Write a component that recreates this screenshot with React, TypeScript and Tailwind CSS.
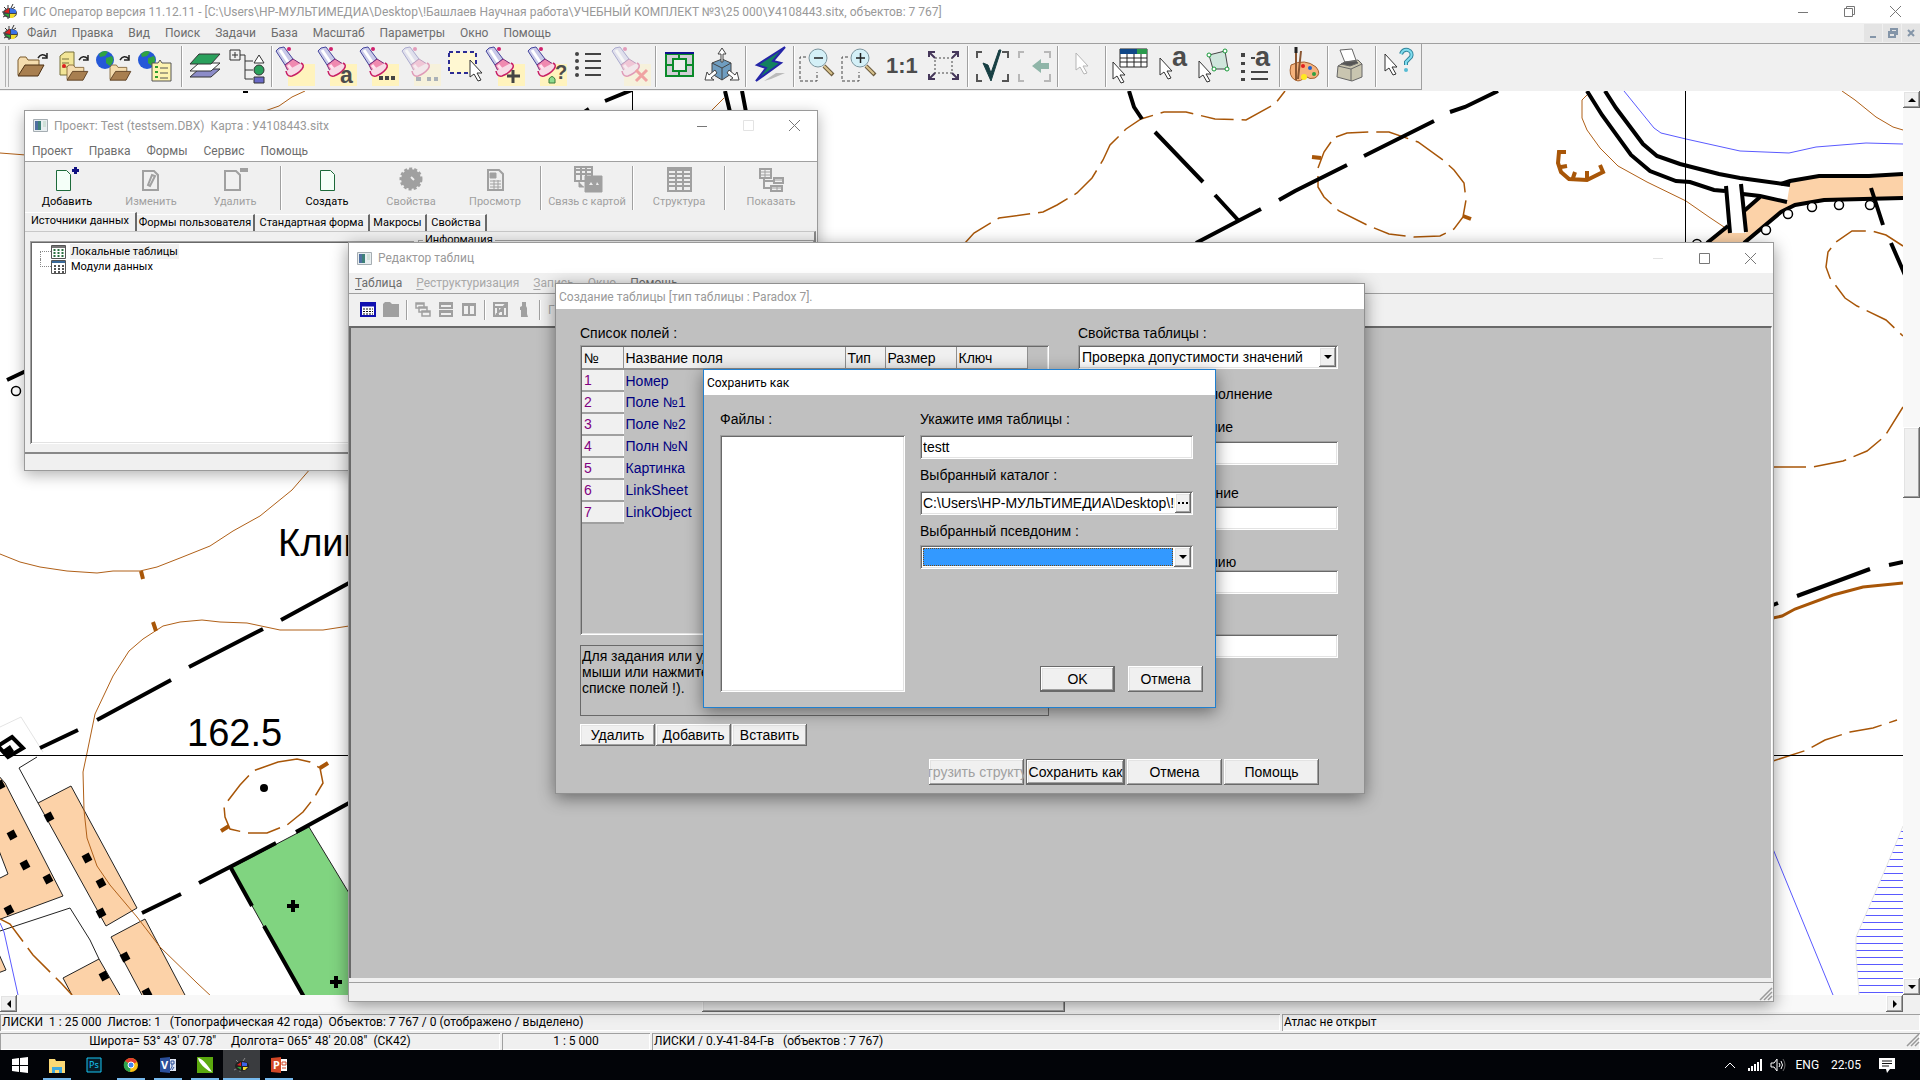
import type { ReactNode } from "react";

const UI = "font-[Roboto,'Noto_Sans',sans-serif] text-[12px] leading-4";
const SMALL = "font-[Roboto,'Noto_Sans',sans-serif] text-[11px] leading-4";
const DLG = "font-['Liberation_Sans',Arial,sans-serif] text-[14px] leading-4";

const SUNKEN =
  "shadow-[inset_1px_1px_0_#a0a0a0,inset_-1px_-1px_0_#fff,inset_2px_2px_0_#696969,inset_-2px_-2px_0_#e3e3e3]";
const RAISED =
  "shadow-[inset_-1px_-1px_0_#696969,inset_1px_1px_0_#fff,inset_-2px_-2px_0_#a0a0a0,inset_2px_2px_0_#e3e3e3]";
const PANEL = "shadow-[inset_1px_1px_0_#a0a0a0,inset_-1px_-1px_0_#fff]";

/* ---------- toolbar drawings ---------- */

function Flashlight({ faded, children }: { faded?: boolean; children?: ReactNode }) {
  return (
    <g opacity={faded ? 0.4 : 1}>
      <path d="M13 19h27v22H13z" fill="#fff3bd" />
      <path d="M1 6Q3 2 9 2l9 12-8 6z" fill="#c9c9e8" stroke="#45459c" />
      <path d="m5 5 8 12" stroke="#fff" strokeWidth="3" />
      <path d="m10 20 8-6 8 5-12 9z" fill="#f08ab0" stroke="#7a2a78" />
      <path d="m13 20 4 5" stroke="#ffe3ee" strokeWidth="3" />
      <path d="M26 18q4 2 1 6-4 5-10 7-5 1-6-5" fill="#f7dbe6" stroke="#c81e64" strokeWidth="1.5" />
      <circle cx="14" cy="4" r="2" fill="#d0206c" />
      {children}
    </g>
  );
}

function Folder({ x, y }: { x: number; y: number }) {
  return (
    <g transform={`translate(${x} ${y})`}>
      <path d="M0 18V3l2-3h6l2 3h11v5" fill="#f5dcae" stroke="#7a5a2c" />
      <path d="M0 19 7 8h19l-6 11z" fill="#a87f50" stroke="#4d3013" />
    </g>
  );
}

function TurnArrow({ x, y }: { x: number; y: number }) {
  return (
    <path
      transform={`translate(${x} ${y})`}
      d="M0 5Q4-1 9 4M9 0v5H4"
      stroke="#222"
      strokeWidth="1.5"
      fill="none"
    />
  );
}

function Globe() {
  return (
    <g>
      <circle cx="10" cy="15" r="9" fill="#2558d8" />
      <path d="M4 9q5-5 9-2l-3 4-5 1zM11 13l6-2q3 5-2 10l-4-3z" fill="#2fa342" />
    </g>
  );
}

function Pointer({ x, y, faded }: { x: number; y: number; faded?: boolean }) {
  return (
    <path
      transform={`translate(${x} ${y})`}
      d="M0 0v17l4-3 4 7 3-1-4-7h5z"
      fill="#fff"
      stroke={faded ? "#b5b5b5" : "#333"}
    />
  );
}

function Magnifier({ plus }: { plus?: boolean }) {
  return (
    <g>
      <path d="M9 12H3v24h17v-9" fill="none" stroke="#444" strokeDasharray="3 2" />
      <path d="m27 21 9 9" stroke="#6b5a3c" strokeWidth="4" />
      <path d="m27 21 8 8" stroke="#d9c48f" strokeWidth="2" />
      <circle cx="21" cy="13" r="9" fill="#d4f0f7" stroke="#7b959e" />
      <path d={plus ? "M17 13h9M21.500 8v10" : "M17 13h9"} stroke="#222" strokeWidth="1.5" />
    </g>
  );
}

function Glyph({ x, y, size, children }: { x: number; y: number; size: number; children: ReactNode }) {
  return (
    <text x={x} y={y} fontSize={size} fontWeight="700" fill="#4c4c4c" fontFamily="Liberation Sans, Arial, sans-serif">
      {children}
    </text>
  );
}

const listRows = [9, 16, 23, 30];

function Lines() {
  return (
    <g>
      {listRows.map((y) => (
        <g key={y}>
          <circle cx="8" cy={y} r="2" fill="#444" />
          <path d={`M16 ${y}h16`} stroke="#444" strokeWidth="2" />
        </g>
      ))}
    </g>
  );
}

type Tool = { label: string; icon: ReactNode };

const toolGroups: Tool[][] = [
  [
    {
      label: "Открыть карту",
      icon: (
        <g>
          <Folder x={7} y={12} />
          <TurnArrow x={27} y={8} />
        </g>
      ),
    },
    {
      label: "Открыть с сервера",
      icon: (
        <g>
          <path d="M7 11 12 7h9v20l-4 3H7z" fill="#f2e596" stroke="#77703a" />
          <path d="M9 14h7M9 18h7M9 22h7" stroke="#77703a" />
          <circle cx="11" cy="21" r="2" fill="#e02020" />
          <g transform="translate(14 20) scale(.8)">
            <Folder x={0} y={0} />
          </g>
          <TurnArrow x={26} y={10} />
        </g>
      ),
    },
    {
      label: "Открыть геопортал",
      icon: (
        <g>
          <Globe />
          <g transform="translate(15 20) scale(.8)">
            <Folder x={0} y={0} />
          </g>
          <TurnArrow x={25} y={10} />
        </g>
      ),
    },
    {
      label: "Список геопорталов",
      icon: (
        <g>
          <Globe />
          <path d="M15 18h6l2-3 2 3h9v18H15z" fill="#fdf3b0" stroke="#555" />
          <path d="M23 23h8M23 28h8M23 33h8" stroke="#555" />
          <path d="M18 22h3M18 27h3M18 32h3" stroke="#2f9e2f" strokeWidth="2" />
        </g>
      ),
    },
  ],
  [
    {
      label: "Слои",
      icon: (
        <g stroke="#333">
          <path d="M5 32 14 24h21l-9 8z" fill="#8c8cc8" />
          <path d="M5 26 14 18h21l-9 8z" fill="#fff" />
          <path d="M5 19 14 9h21l-9 10z" fill="#2aa05c" />
        </g>
      ),
    },
    {
      label: "Состав",
      icon: (
        <g stroke="#333" fill="none">
          <path d="M3 5h10v10H3zM5 10h6M8 7v6M13 10h5v24h8M18 16h8M18 25h8" />
          <path d="m32 10 5 8H27z" fill="#fff" />
          <circle cx="32" cy="25" r="5" fill="#2aa05c" />
          <path d="M27 32h10v6H27z" fill="#6a6ac8" />
        </g>
      ),
    },
  ],
  [
    { label: "Поиск", icon: <Flashlight /> },
    { label: "Поиск по названию", icon: <Flashlight><Glyph x={23} y={38} size={23}>a</Glyph></Flashlight> },
    { label: "Поиск по списку", icon: <Flashlight><path d="M20 33h4M26 33h4M32 33h4" stroke="#444" strokeWidth="4" /></Flashlight> },
    { label: "Продолжить поиск", icon: <Flashlight faded><path d="M15 34h5M26 34h4M33 34h4" stroke="#456" strokeWidth="4" /></Flashlight> },
    {
      label: "Выделить область",
      icon: (
        <g>
          <path d="M6 7h27v21H6z" fill="#fff8d2" stroke="#2c2c94" strokeWidth="2" strokeDasharray="4 3" />
          <Pointer x={27} y={15} />
        </g>
      ),
    },
    { label: "Добавить к выделению", icon: <Flashlight><path d="M22 31h13M28 25v13" stroke="#444" strokeWidth="3" /></Flashlight> },
    {
      label: "Условия отбора",
      icon: (
        <Flashlight>
          <path d="M22 38v-4q3-5 6 0v4z" fill="#8fdc8f" stroke="#3a7a3a" />
          <Glyph x={28} y={34} size={20}>?</Glyph>
        </Flashlight>
      ),
    },
    { label: "Список объектов", icon: <Lines /> },
    { label: "Сбросить выделение", icon: <Flashlight faded><path d="m25 25 11 11M36 25 25 36" stroke="#f03030" strokeWidth="3" /></Flashlight> },
  ],
  [
    {
      label: "Окно карты",
      icon: (
        <g fill="none" stroke="#0b8a2a" strokeWidth="2">
          <path d="M7 9h27v22H7z" fill="#d2cfd6" />
          <path d="M14 14h13v12H14zM20 9v5M20 26v5M7 20h7M27 20h7" fill="#eee" />
          <path d="M6 8h29" stroke="#101090" />
        </g>
      ),
    },
    {
      label: "Трёхмерный вид",
      icon: (
        <g stroke="#444">
          <path d="m11 18 10-4 9 4v11l-9 6-10-6z" fill="#6f9dc0" />
          <path d="m11 18 10 5 9-5M21 23v12" fill="none" />
          <path d="M20 17V9h-3l4-6 4 6h-3v8z" fill="#fff" />
          <path d="m14 25-6 5-2-3-2 8h9l-3-2 6-5zM28 25l6 5 2-3 2 8h-9l3-2-6-5z" fill="#fff" />
        </g>
      ),
    },
  ],
  [
    {
      label: "Обновить",
      icon: (
        <g>
          <path d="m15 36 12-8 9 0-14 6z" fill="#bbb" />
          <path d="M36 2 8 20l9 3L7 36l25-18-8-2z" fill="#128060" stroke="#2525a8" strokeWidth="2" />
        </g>
      ),
    },
  ],
  [
    { label: "Уменьшить", icon: <Magnifier /> },
    { label: "Увеличить", icon: <Magnifier plus /> },
    { label: "Масштаб 1:1", icon: <Glyph x={5} y={28} size={22}>1:1</Glyph> },
    {
      label: "Показать всё",
      icon: (
        <g>
          <path d="M12 13h17v15H12z" fill="none" stroke="#444" strokeDasharray="2 2" />
          <path
            d="m12 13-5-5M29 13l5-5M12 28l-5 5M29 28l5 5M6 12V7h6M29 7h6v5M6 29v5h6M29 34h6v-5"
            fill="none"
            stroke="#45375a"
            strokeWidth="2"
          />
        </g>
      ),
    },
  ],
  [
    {
      label: "Применить",
      icon: (
        <g fill="none">
          <path d="M11 7H6v6M31 7h6v6M6 29v7h5M37 29v7h-6" stroke="#555" strokeWidth="2" />
          <path d="m12 18 5 2 3 8L28 5h2L20 36z" fill="#173f43" stroke="#173f43" />
        </g>
      ),
    },
    {
      label: "Вернуть",
      icon: (
        <g fill="none">
          <path d="M11 7H6v6M31 7h6v6M6 29v7h5M37 29v7h-6" stroke="#b8b8b8" strokeWidth="2" />
          <path d="m19 21 9-7v4h8v6h-8v4z" fill="#8fb5a8" />
        </g>
      ),
    },
  ],
  [{ label: "Указатель", icon: <Pointer x={15} y={8} faded /> }],
  [
    {
      label: "Таблица объектов",
      icon: (
        <g>
          <path d="M11 4h27v18H11z" fill="#fff" stroke="#222" />
          <path d="M11 4h27v5H11z" fill="#104888" />
          <path d="M28 4h10v5H28z" fill="#2a9a4c" />
          <path d="M11 13h27M11 17h27M18 9v13M25 9v13M32 9v13" stroke="#222" />
          <Pointer x={4} y={17} />
        </g>
      ),
    },
    { label: "Подпись объекта", icon: <g><Glyph x={21} y={21} size={27}>a</Glyph><Pointer x={9} y={13} /></g> },
    {
      label: "Контур объекта",
      icon: (
        <g>
          <path d="m16 10 16-4 3 18H20z" fill="#cfe6dc" stroke="#444" />
          {[[16, 10], [32, 6], [34, 24], [21, 24]].map(([cx, cy]) => (
            <circle key={cx} cx={cx} cy={cy} r="2" fill="#fff" stroke="#169a38" />
          ))}
          <Pointer x={6} y={16} />
        </g>
      ),
    },
    {
      label: "Легенда",
      icon: (
        <g>
          <path d="M8 8v4M8 17v3M8 25v3M8 33v3" stroke="#444" strokeWidth="4" />
          <path d="M16 13h4M16 27h17M16 34h17" stroke="#444" strokeWidth="2" />
          <Glyph x={20} y={21} size={27}>a</Glyph>
        </g>
      ),
    },
  ],
  [
    {
      label: "Палитра",
      icon: (
        <g>
          <path d="M8 20q14-7 25 2 6 7-1 11-5 2-10-2-4 7-10 4-7-4-4-15z" fill="#f6b27c" stroke="#a25f2e" />
          <circle cx="20" cy="21" r="2" fill="#e02020" />
          <circle cx="27" cy="23" r="2" fill="#2060d0" />
          <circle cx="31" cy="29" r="2" fill="#30a040" />
          <circle cx="21" cy="32" r="3" fill="#ffe920" />
          <path d="M13 3v32M18 6l-3 28" stroke="#8a5632" strokeWidth="2" />
          <path d="M13 2v6" stroke="#222" strokeWidth="3" />
        </g>
      ),
    },
  ],
  [
    {
      label: "Печать",
      icon: (
        <g stroke="#666">
          <path d="m9 5 12-1 5 14-11 2z" fill="#fff" />
          <path d="m7 21 7-4 13-2 4 4v13l-10 4-15-4z" fill="#c9c5b0" />
          <path d="m7 21 13 3 11-5M20 24v12" fill="none" />
          <path d="m10 19 4-2 11-1 2 2-8 3z" fill="#555" />
        </g>
      ),
    },
  ],
  [
    {
      label: "Справка",
      icon: (
        <g>
          <Pointer x={6} y={9} />
          <path d="M22 9q2-5 7-4 5 2 3 7l-5 5v3" fill="none" stroke="#32859c" strokeWidth="4" />
          <path d="M22 9q2-5 7-4 5 2 3 7l-5 5v3" fill="none" stroke="#7fdcee" strokeWidth="2" />
          <circle cx="27" cy="25" r="2" fill="#56bcd4" />
        </g>
      ),
    },
  ],
];

function AppIcon() {
  return (
    <svg width="16" height="16" viewBox="0 0 16 16" className="shrink-0">
      <path d="M2 3l3 3M6 1v4M11 0 9 4M0 8h4M1 13l4-2M13 3l-3 2M6 15v-3" stroke="#333" />
      <ellipse cx="8" cy="9" rx="7" ry="5" fill="#444" />
      <path d="M2 8 7 4v5z" fill="#e02020" />
      <path d="m8 4 6 2v3H8z" fill="#3c72e8" />
      <path d="M2 10h5v3z" fill="#28a438" />
      <path d="M8 10h6l-3 4H8z" fill="#f2dc30" />
    </svg>
  );
}

function FormIcon() {
  return (
    <svg width="15" height="13" viewBox="0 0 15 13" className="shrink-0">
      <path d="M.5.5h14v12H.5z" fill="#e8eef0" stroke="#a5adb2" />
      <path d="M2 2h6v9H2z" fill="#3d8078" />
      <path d="M2 2h3v9H2z" fill="#4f6fa0" />
      <path d="M10 2h3v6h-3z" fill="#cfe0d8" />
    </svg>
  );
}

/* ---------- map ---------- */

const houses = [
  [49, 817], [12, 835], [25, 865], [48, 879], [9, 910], [87, 858], [101, 883],
  [101, 913], [125, 957], [104, 976], [147, 993], [0, 785],
];
const posts = [[1870, 205], [1839, 205], [1812, 207], [1788, 214], [1766, 230], [1697, 244], [16, 391]];
const hatch = Array.from({ length: 24 }, (_, i) => 831 + i * 7);

function MapView() {
  return (
    <svg
      className="absolute inset-0 h-full w-full bg-white"
      viewBox="0 91 1903 904"
      preserveAspectRatio="xMinYMin slice"
      fill="none"
    >
      <defs>
        <clipPath id="marsh">
          <path d="M1903 826 1887 865 1856 937V955l3 40h44z" />
        </clipPath>
      </defs>

      {/* blocks */}
      <g fill="#fcd2a8" stroke="#222">
        <path d="M-2 775 5 783 63 896-2 920z" />
        <path d="M38 803 71 786l66 122-31 18zM111 937l34-18 41 78h-43zM63 978l36-19 22 38H73zM-2 952l8 18-8 3z" />
        <path d="m-2 848 10 26-10 5z" fill="#fff" />
      </g>
      <path d="M37 757 19 768 38 803M0 931 70 908 90 940 99 959" stroke="#222" />
      <path d="M231 868 309 827 352 898V997H303z" fill="#80d480" stroke="#222" />

      {/* hydrography */}
      <g stroke="#5a5aff">
        <path d="M1624 91 1654 128 1661 133 1686 139 1740 151 1789 153 1816 147 1866 143 1903 144" />
        <path d="M0 923 4 932 18 995M1773 849 1833 995" />
        <g clipPath="url(#marsh)" shapeRendering="crispEdges">
          {hatch.map((y) => (
            <path key={y} d={`M1850 ${y}.5H1903`} />
          ))}
        </g>
      </g>
      <path d="M1903 826 1887 865 1856 937V955l3 40" stroke="#e4e4e4" />
      <path d="M0 727 21 717 43 752" stroke="#e4e4e4" />

      {/* contours */}
      <g stroke="#b06018">
        <path d="M305 91 292 97 279 106 262 112M0 153 26 155M311 468 292 490 260 516 233 531 210 546 180 558 157 567 140 571H113L97 573 67 571 40 567 20 562 0 554" />
        <path d="M349 626 323 630H280L247 623 220 622 202 620 180 622 163 626 143 639 129 651 113 676 95 714 87 753 83 772 84 810 87 838 97 866 110 885 137 917 160 947 197 983 212 997" />
        <path d="M1587 95 1582 100V118L1587 130 1600 148 1618 166 1647 182 1686 201 1709 217 1724 227M1842 91 1855 100 1876 117 1893 127 1903 130M724 98 710 112" />
      </g>
      <g stroke="#a85608" strokeWidth="1.5" strokeDasharray="33 8">
        <path d="M965 243 974 233 999 218 1043 212 1057 205 1077 193 1092 178 1103 160 1110 145 1126 129 1141 119 1164 112H1186L1215 119 1246 120 1275 104 1285 91" />
        <path d="M1336 137 1347 133 1369 132H1389L1418 142 1443 160 1454 170 1464 183 1466 200 1463 217 1454 229 1440 236 1414 237 1389 234 1367 225 1339 211 1324 197 1318 187V168L1324 152 1331 142" />
        <path d="M1903 246 1886 235 1872 231H1852L1836 242 1828 252 1826 267 1830 278 1845 298 1857 306 1886 320 1903 336" />
        <path d="M1773 467H1813L1843 461 1867 451 1885 436 1903 407M1773 761 1807 750 1825 740 1850 732 1873 728 1897 720" />
        <path d="M278 762 297 759 310 762 320 768 323 783 314 798 303 812 287 825 267 833H247L230 829 225 817 224 806 240 785 253 771z" />
        <path d="M0 919 10 924 33 955 62 984 72 995" />
      </g>
      <path d="M1773 618 1782 616 1795 609 1833 595 1863 587 1903 583" stroke="#a85608" strokeWidth="3" />
      <g stroke="#a85608" strokeWidth="4">
        <path d="M1566 152 1559 152 1558 163 1561 172 1569 179 1587 180 1603 172 1600 165M1561 167 1567 166M1573 178 1575 172M1587 178V171" />
        <path d="M1312 157 1321 158M1463 216 1471 219M141 571 143 579M153 622 156 631M320 768 328 763M229 826 221 831" />
      </g>

      {/* roads */}
      <path
        d="M1790 183 1819 176H1869L1903 174V198L1824 200 1795 205 1781 212 1744 243H1707L1760 197 1787 202z"
        fill="#fcd2a8"
      />
      <g stroke="#000" strokeWidth="4">
        <path d="M1781 184 1790 181 1819 176H1869L1903 174M1903 198 1824 200 1795 205 1781 212 1744 243M1760 197 1744 211M1728 226 1707 243" />
        <path d="M1587 91 1602 115 1631 155 1650 171 1676 181 1690 182 1714 190 1725 191M1743 194 1760 196 1787 202" />
        <path d="M1605 91 1616 108 1643 144 1657 156 1680 164 1719 174 1740 178 1790 185" />
        <path d="M1726 186 1729 233H1746L1741 184z" fill="#fff" stroke="none" />
        <path d="M1726 186 1730 233M1741 184 1746 232" />
        <path d="M1871 188 1883 225M1891 243 1905 275M725 91 730 112M742 91 746 112" />
        <path d="M1129 91 1134 107 1142 119M1155 132 1203 182M1215 195 1238 220" />
        <path d="M1196 243 1261 209M1279 200 1295 191 1347 165M1364 156 1434 121M1450 112 1465 107 1498 91" />
        <path d="M605 101 632 90M583 113 589 109M7 380 26 371M243 91h5" />
        <path d="M1773 605 1778 603M1797 596 1870 569M1889 565 1903 562" />
        <path d="M349 583 281 620M263 629 189 667M171 680 97 720M78 730 40 748" />
        <path d="M349 803 296 832M276 843 199 883M181 894 142 913M231 868 252 906M264 926 304 997" />
        <path d="M12 737 23 748 8 757-2 746z" fill="#fff" />
        <path d="M287 906h12M293 900v12M330 982h12M336 976v12" />
      </g>
      <path d="m3 750 7-5 4 6-6 6z" fill="#000" />
      <g stroke="#000" shapeRendering="crispEdges">
        <path d="M0 755.500H1903M1685.500 91V755M632.500 91V243" />
      </g>
      {posts.map(([cx, cy]) => (
        <circle key={cx} cx={cx} cy={cy} r="4.500" stroke="#000" strokeWidth="1.500" fill="#fff" />
      ))}
      <circle cx="264" cy="788" r="4" fill="#000" />
      {houses.map(([x, y]) => (
        <path key={`${x}-${y}`} transform={`translate(${x} ${y}) rotate(-28)`} d="M-4-4h8v8h-8z" fill="#000" />
      ))}
      <g fill="#000" fontFamily="Liberation Sans, Arial, sans-serif" fontSize="38">
        <text x="278" y="556">Клим</text>
        <text x="187" y="746">162.5</text>
      </g>
    </svg>
  );
}

/* ---------- window furniture ---------- */

function CaptionButtons({ muted, max = true }: { muted?: "min" | "max"; max?: boolean }) {
  return (
    <div className="flex h-full items-center">
      <button aria-label="Свернуть" className={`flex h-full w-[46px] items-center justify-center ${muted === "min" ? "opacity-20" : ""}`}>
        <svg width="10" height="10"><path d="M0 5.500h10" stroke="#777" /></svg>
      </button>
      <button aria-label="Развернуть" className={`flex h-full w-[46px] items-center justify-center ${muted === "max" ? "opacity-20" : ""}`}>
        <svg width="11" height="11" fill="none" stroke="#777">
          {max ? <path d="M.5.5h10v10H.5z" /> : <path d="M.5 2.500h8v8h-8zM2.500 2.500v-2h8v8h-2" />}
        </svg>
      </button>
      <button aria-label="Закрыть" className="flex h-full w-[46px] items-center justify-center">
        <svg width="11" height="11"><path d="m0 0 11 11M11 0 0 11" stroke="#777" /></svg>
      </button>
    </div>
  );
}

function Arrow({ dir }: { dir: "up" | "down" | "left" | "right" }) {
  const d = { up: "M0 6 4 2l4 4z", down: "M0 2h8L4 6z", left: "M6 0v8L2 4z", right: "M2 0v8l4-4z" }[dir];
  return <svg width="8" height="8" className="shrink-0"><path d={d} fill="#000" /></svg>;
}

function ScrollButton({ dir, label }: { dir: "up" | "down" | "left" | "right"; label: string }) {
  return (
    <button aria-label={label} className={`flex h-[17px] w-[17px] shrink-0 items-center justify-center bg-[#f0f0f0] ${RAISED}`}>
      <Arrow dir={dir} />
    </button>
  );
}

function PushButton({ children, className, primary, disabled }: { children: ReactNode; className: string; primary?: boolean; disabled?: boolean }) {
  return (
    <button
      disabled={disabled}
      className={`flex items-center justify-center overflow-hidden whitespace-nowrap bg-[#f0f0f0] ${RAISED} ${primary ? "border border-[#696969]" : ""} ${disabled ? "text-[#a0a0a0]" : "text-black"} ${className}`}
    >
      <span>{children}</span>
    </button>
  );
}

function SelectBox({ id, value, active, className = "" }: { id: string; value: string; active?: boolean; className?: string }) {
  return (
    <div className={`relative flex h-6 bg-white p-[2px] ${SUNKEN} ${className}`}>
      <select
        id={id}
        className={`min-w-0 flex-1 appearance-none px-[2px] outline-none ${active ? "m-px mr-[18px] border border-dotted border-[#7a4a10] bg-[#3399ff]" : ""}`}
      >
        <option>{value}</option>
      </select>
      <span className={`pointer-events-none absolute top-[2px] right-[2px] bottom-[2px] flex w-[17px] items-center justify-center bg-[#f0f0f0] ${RAISED}`}>
        <Arrow dir="down" />
      </span>
    </div>
  );
}

/* ---------- project window ---------- */

const grey = "#a0a0a0";

const projectTools: ({ label: string; on?: boolean; icon: ReactNode } | null)[] = [
  {
    label: "Добавить",
    on: true,
    icon: (
      <g>
        <path d="M5.500 4.500h10l4 4v16h-14z" fill="#f4fff8" stroke="#1d6a3a" />
        <path d="M21 4.500h7M24.500 1v7" stroke="#101080" strokeWidth="3" />
      </g>
    ),
  },
  { label: "Изменить", icon: <path d="M8 5h11l4 4v15H8zM13 19l4-10 3 1-5 10z" fill="none" stroke={grey} strokeWidth="2" /> },
  {
    label: "Удалить",
    icon: (
      <g>
        <path d="M6 5h11l4 4v15H6z" fill="none" stroke={grey} strokeWidth="2" />
        <path d="M21 4h8" stroke={grey} strokeWidth="4" />
      </g>
    ),
  },
  null,
  { label: "Создать", on: true, icon: <path d="M9.500 4.500h10l4 4v16h-14z" fill="#f4fff8" stroke="#1d6a3a" /> },
  {
    label: "Свойства",
    icon: (
      <g>
        <circle cx="16" cy="13" r="10" fill={grey} stroke={grey} strokeWidth="3" strokeDasharray="3 2" />
        <path d="M16 11l3 3" stroke="#eee" strokeWidth="2" />
      </g>
    ),
  },
  {
    label: "Просмотр",
    icon: (
      <g>
        <path d="M9 4h11l4 4v16H9z" fill="#eee" stroke={grey} strokeWidth="2" />
        <path d="M11 7h6v5h-6zM11 15h11M11 18h11M11 21h11M15 14v9M19 14v9" stroke={grey} fill={grey} />
      </g>
    ),
  },
  null,
  {
    label: "Связь с картой",
    icon: (
      <g>
        <path d="M4 1h17v14H4z" fill="#eee" stroke={grey} strokeWidth="2" />
        <path d="M4 4h17M4 8h17M10 1v14M15 1v14" stroke={grey} strokeWidth="2" />
        <path d="M14 10h17v16H14zM8 16v5h5" fill={grey} stroke={grey} />
        <path d="m18 19 2-3 2 3zM25 19l1-3 2 3z" fill="#eee" />
      </g>
    ),
  },
  null,
  {
    label: "Структура",
    icon: (
      <g stroke={grey} strokeWidth="2">
        <path d="M5 2h23v23H5z" fill="#eee" />
        <path d="M5 4h23M5 8h23M5 12h23M5 16h23M5 20h23M13 2v23M20 2v23" />
      </g>
    ),
  },
  null,
  {
    label: "Показать",
    icon: (
      <g stroke={grey} fill="none">
        <path d="M5 3h11v9H5zM19 12h9v5h-9zM16 20h11v5H16zM9 12v10h7M9 15h10" strokeWidth="2" />
        <path d="M5 6h11M5 9h11M10 3v9M19 14h9M16 22h11M22 19v6" />
      </g>
    ),
  },
];

const tabs = [
  ["Источники данных", "w-[112px]"],
  ["Формы пользователя", "w-[118px]"],
  ["Стандартная форма", "w-[115px]"],
  ["Макросы", "w-[57px]"],
  ["Свойства", "w-[60px]"],
];

function TableGlyph({ blue = "#1a1aa0", mark }: { blue?: string; mark?: boolean }) {
  return (
    <svg width="15" height="14" viewBox="0 0 15 14" className="shrink-0">
      <path d="M.5.5h14v13H.5z" fill="#fff" stroke="#555" />
      <path d="M1 1h13v2H1z" fill={blue} />
      {mark ? (
        <path d="M3.500 4v9M7.500 4v9M11.500 4v9" stroke="#2a7040" strokeWidth="2" strokeDasharray="2 1" />
      ) : (
        <path d="M3 6h10M3 9h10M3 12h10" stroke="#555" strokeDasharray="2 2" strokeWidth="2" />
      )}
    </svg>
  );
}

function ProjectWindow() {
  return (
    <section className={`absolute top-[110px] left-[24px] flex h-[361px] w-[794px] flex-col border border-[#9a9a9a] bg-[#f0f0f0] shadow-[0_4px_14px_rgba(0,0,0,0.3)] ${SMALL}`}>
      <header className={`flex h-[29px] items-center bg-white pl-2 text-[#999] ${UI}`}>
        <FormIcon />
        <h2 className="ml-[6px] flex-1 whitespace-pre">Проект: Test (testsem.DBX)  Карта : У4108443.sitx</h2>
        <CaptionButtons muted="max" />
      </header>
      <nav className={`flex h-[21px] items-center gap-4 bg-white pl-[7px] text-[#6d6d6d] ${UI}`}>
        {["Проект", "Правка", "Формы", "Сервис", "Помощь"].map((item) => (
          <button key={item}>{item}</button>
        ))}
      </nav>
      <div className="flex h-[51px] shrink-0 border-t border-[#a0a0a0] pt-1">
        {projectTools.map((tool, i) =>
          tool ? (
            <button
              key={tool.label}
              disabled={!tool.on}
              className={`flex w-[84px] shrink-0 flex-col items-center whitespace-nowrap ${tool.on ? "text-black" : "text-[#a0a0a0]"}`}
            >
              <svg width="32" height="28" viewBox="0 0 32 28">{tool.icon}</svg>
              <span>{tool.label}</span>
            </button>
          ) : (
            <span key={i} className="mx-[3px] h-11 w-[2px] border-r border-l border-r-white border-l-[#a0a0a0]" />
          ),
        )}
      </div>
      <div role="tablist" className="flex h-[19px] shrink-0 items-end">
        {tabs.map(([label, width], i) => (
          <button
            key={label}
            role="tab"
            aria-selected={i === 0}
            className={`shrink-0 whitespace-nowrap border-t border-r-2 border-t-white border-r-[#696969] ${width} ${i === 0 ? "h-[19px] pb-1" : "h-[17px]"}`}
          >
            {label}
          </button>
        ))}
      </div>
      <div className="mr-px flex min-h-0 flex-1 border-t border-r-2 border-t-[#c8c8c8] border-r-[#888] pt-[9px] pb-[6px] pl-[5px]">
        <ul className={`w-[384px] bg-white pt-[3px] pl-[10px] ${SUNKEN}`}>
          <li className="flex h-[15px] items-center">
            <span className="mt-[7px] h-2 w-[11px] border-t border-l border-dotted border-[#888]" />
            <TableGlyph mark blue="#777" />
            <span className="ml-1 bg-[#f0f0f0] px-px leading-[15px]">Локальные таблицы</span>
          </li>
          <li className="flex h-[15px] items-center">
            <span className="mb-[7px] h-2 w-[11px] border-b border-l border-dotted border-[#888]" />
            <TableGlyph blue="#3a6a9a" />
            <span className="ml-1 px-px">Модули данных</span>
          </li>
        </ul>
        <fieldset className="-mt-[9px] ml-1 flex-1 border border-[#a0a0a0]">
          <legend className="ml-1 px-[2px]">Информация</legend>
        </fieldset>
      </div>
      <footer className="mt-[2px] h-[18px] shrink-0 border-t-2 border-[#888]" />
    </section>
  );
}

/* ---------- table editor ---------- */

const editorMenu = [
  { label: "Таблица", on: true },
  { label: "Реструктуризация" },
  { label: "Запись" },
  { label: "Окно" },
  { label: "Помощь", on: true },
];

const editorTools: (ReactNode | null)[] = [
  <g key="t">
    <path d="M1 1h14v13H1z" fill="#fff" stroke="#1010b0" strokeWidth="2" />
    <path d="M1 3h14" stroke="#1010b0" strokeWidth="3" />
    <path d="M3 7h10M3 9.500h10M3 12h10" stroke="#111" strokeDasharray="2 1" />
  </g>,
  <path key="f" d="M0 2 2 0h5l2 2h7v13H0z" fill={grey} />,
  null,
  <path key="c" d="M1 1h8v5H1zM4 5h8v5H4zM7 9h8v5H7zM1 2h8M4 6h8M7 10h8" stroke={grey} strokeWidth="1.500" fill="none" />,
  <path key="h" d="M2 1h12v5H2zM2 9h12v5H2zM2 2h12M2 10h12" stroke={grey} strokeWidth="2" fill="none" />,
  <path key="v" d="M2 2h12v11H2zM8 2v11M2 3h12" stroke={grey} strokeWidth="2" fill="none" />,
  null,
  <path key="e" d="M1 1h13v13H1zM1 5h13M5 9h5M5 5v9M3 13 13 2M10 5v9" stroke={grey} strokeWidth="2" fill="none" />,
  <path key="i" d="M6 0h4v4l1 2v6l1 3H5V8H4V5l2-1z" fill={grey} />,
  null,
];

function EditorWindow() {
  return (
    <section className={`absolute top-[242px] left-[348px] flex h-[760px] w-[1426px] flex-col border border-[#9a9a9a] bg-[#f0f0f0] shadow-[0_4px_16px_rgba(0,0,0,0.4)] ${UI}`}>
      <header className="flex h-[30px] shrink-0 items-center bg-white pl-2 text-[#999]">
        <FormIcon />
        <h2 className="ml-[6px] flex-1">Редактор таблиц</h2>
        <CaptionButtons muted="min" />
      </header>
      <nav className="flex h-5 shrink-0 items-center gap-[14px] pl-[6px]">
        {editorMenu.map(({ label, on }) => (
          <button key={label} className={on ? "text-[#6d6d6d]" : "text-[#a8a8a8]"}>
            <span className={label === "Помощь" ? "" : "underline underline-offset-2"}>{label[0]}</span>
            {label.slice(1)}
          </button>
        ))}
      </nav>
      <div className="flex h-[33px] shrink-0 items-center gap-[7px] border-t border-[#a0a0a0] pl-[11px]">
        {editorTools.map((icon, i) =>
          icon ? (
            <button key={i} aria-label={`Команда ${i + 1}`}>
              <svg width="16" height="16" viewBox="0 0 16 16">{icon}</svg>
            </button>
          ) : (
            <span key={i} className="h-5 w-[2px] border-r border-l border-r-white border-l-[#a0a0a0]" />
          ),
        )}
        <span className="text-[#a8a8a8]">Г</span>
      </div>
      <div className="mr-px flex-1 border-t-2 border-r border-l-2 border-t-[#696969] border-r-white border-l-[#696969] bg-[#c0c0c0]" />
      <footer className="mt-1 flex h-[19px] shrink-0 items-end justify-end border-t border-[#a0a0a0]">
        <SizeGrip />
      </footer>
    </section>
  );
}

function SizeGrip() {
  return (
    <svg width="14" height="14" className="shrink-0">
      <path d="M1 13 13 1M5 13l8-8M9 13l4-4" stroke="#999" strokeWidth="1.500" />
    </svg>
  );
}

/* ---------- create table dialog ---------- */

const fields = ["Номер", "Поле №1", "Поле №2", "Полн №N", "Картинка", "LinkSheet", "LinkObject"];
const columns = [
  ["№", "w-[41px]"],
  ["Название поля", "w-[222px]"],
  ["Тип", "w-10"],
  ["Размер", "w-[71px]"],
  ["Ключ", "w-[71px]"],
];
const limits = [
  { id: "min", label: "Минимальное значение", top: "mt-[17px]", gap: "mt-[6px]" },
  { id: "max", label: "Максимальное значение", top: "mt-5", gap: "mt-[5px]" },
  { id: "def", label: "Значение по умолчанию", top: "mt-6", gap: "mt-0" },
  { id: "mask", label: "Шаблон", top: "mt-6", gap: "mt-0" },
];

function CreateTableDialog() {
  return (
    <section className={`absolute top-[283px] left-[555px] flex h-[511px] w-[810px] flex-col border border-[#909090] bg-[#c0c0c0] shadow-[0_4px_16px_rgba(0,0,0,0.45)] ${DLG}`}>
      <header className={`flex h-[25px] shrink-0 items-center bg-white pl-[3px] text-[#999] ${UI}`}>
        <h2>Создание таблицы [тип таблицы : Paradox 7].</h2>
      </header>
      <div className="flex gap-[29px] pt-4 pl-6">
        <div className="w-[469px]">
          <p>Список полей :</p>
          <div className={`mt-1 h-[290px] p-[2px] ${SUNKEN}`}>
            <table className="table-fixed border-collapse text-left">
              <thead>
                <tr className="h-[22px]">
                  {columns.map(([name, width]) => (
                    <th key={name} className={`border-r border-b-2 border-[#909090] bg-[#f0f0f0] p-0 pl-[2px] font-normal ${width}`}>
                      {name}
                    </th>
                  ))}
                </tr>
              </thead>
              <tbody className="text-[#000080]">
                {fields.map((name, i) => (
                  <tr key={name} className="h-[22px]">
                    <td className="border-r border-b-2 border-r-white border-b-[#a0a0a0] bg-[#f0f0f0] p-0 pl-[2px] text-[#800080]">{i + 1}</td>
                    <td className="p-0 pl-[2px]">{name}</td>
                    <td />
                    <td />
                    <td />
                  </tr>
                ))}
              </tbody>
            </table>
          </div>
          <p className="mt-[10px] h-[71px] border border-[#696969] pt-[2px] pl-px">
            Для задания или удаления ключа дважды щёлкните кнопкой<br />
            мыши или нажмите пробел в колонке «Ключ» (в<br />
            списке полей !).
          </p>
          <div className="mt-2 flex gap-px">
            <PushButton className="h-[22px] w-[75px]">Удалить</PushButton>
            <PushButton className="h-[22px] w-[75px]">Добавить</PushButton>
            <PushButton className="h-[22px] w-[75px]">Вставить</PushButton>
          </div>
        </div>
        <div className="flex w-[260px] flex-col">
          <label htmlFor="props">Свойства таблицы :</label>
          <SelectBox id="props" value="Проверка допустимости значений" className="mt-1" />
          <label className="mt-[17px] flex items-center gap-[6px] whitespace-nowrap">
            <input type="checkbox" className="h-4 w-4" />
            Обязательное заполнение
          </label>
          {limits.map(({ id, label, top, gap }) => (
            <div key={id} className={`flex flex-col ${top}`}>
              <label htmlFor={id}>{label}</label>
              <input id={id} className={`h-6 bg-white px-1 ${gap} ${SUNKEN}`} />
            </div>
          ))}
        </div>
      </div>
      <div className="mt-[13px] flex gap-[2px] pl-[373px]">
        <PushButton className="h-[26px] w-[95px]" disabled>Загрузить структуру</PushButton>
        <PushButton className="h-[26px] w-[99px]" primary>Сохранить как</PushButton>
        <PushButton className="h-[26px] w-[95px]">Отмена</PushButton>
        <PushButton className="h-[26px] w-[95px]">Помощь</PushButton>
      </div>
    </section>
  );
}

function SaveAsDialog() {
  return (
    <section role="dialog" aria-label="Сохранить как" className={`absolute top-[369px] left-[703px] flex h-[339px] w-[513px] flex-col border border-[#2080d0] bg-[#c0c0c0] shadow-[0_4px_16px_rgba(0,0,0,0.45)] ${DLG}`}>
      <header className={`flex h-[25px] shrink-0 items-center bg-white pl-[3px] text-black ${UI}`}>
        <h2>Сохранить как</h2>
      </header>
      <div className="flex flex-1 gap-[15px] pt-4 pb-[15px] pl-4">
        <div className="w-[185px]">
          <label htmlFor="files">Файлы :</label>
          <select id="files" size={10} className={`mt-2 block h-[257px] w-full appearance-none overflow-hidden bg-white ${SUNKEN}`} />
        </div>
        <div className="flex w-[283px] flex-col">
          <div className="flex flex-col pr-[10px]">
            <label htmlFor="name">Укажите имя таблицы :</label>
            <input id="name" defaultValue="testt" className={`mt-2 h-6 bg-white px-[3px] ${SUNKEN}`} />
            <label htmlFor="dir" className="mt-2">Выбранный каталог :</label>
            <div className={`mt-2 flex h-6 bg-white p-[2px] ${SUNKEN}`}>
              <input id="dir" defaultValue="C:\Users\HP-МУЛЬТИМЕДИА\Desktop\!Башлаев" className="min-w-0 flex-1 pl-px" />
              <button aria-label="Обзор" className={`flex w-4 items-center justify-center bg-[#f0f0f0] ${RAISED}`}>
                <svg width="10" height="2"><path d="M0 1h2M4 1h2M8 1h2" stroke="#000" strokeWidth="2" /></svg>
              </button>
            </div>
            <label htmlFor="alias" className="mt-2">Выбранный псевдоним :</label>
            <SelectBox id="alias" value="" active className="mt-[6px]" />
          </div>
          <div className="mt-auto flex justify-end gap-[13px]">
            <PushButton className="h-[26px] w-[75px]" primary>OK</PushButton>
            <PushButton className="h-[26px] w-[75px]">Отмена</PushButton>
          </div>
        </div>
      </div>
    </section>
  );
}

/* ---------- taskbar ---------- */

const taskbar: { label: string; state?: "open" | "active"; icon: ReactNode }[] = [
  { label: "Пуск", icon: <path d="M0 2l7-1v7H0zM8 1l8-1v8H8zM0 9h7v6l-7-1zM8 9h8v7l-8-1z" fill="#fff" /> },
  {
    label: "Проводник",
    state: "open",
    icon: (
      <g>
        <path d="M0 2h6l1 2h9v12H0z" fill="#fbd975" />
        <path d="M3 16v-6h10v6h-3v-3H6v3z" fill="#3fa9e0" />
      </g>
    ),
  },
  {
    label: "Photoshop",
    icon: (
      <g>
        <path d="M1 1h14v14H1z" fill="#071e28" stroke="#16c5f4" />
        <text x="3" y="11" fontSize="9" fill="#16c5f4" fontFamily="Noto Sans, sans-serif">Ps</text>
      </g>
    ),
  },
  {
    label: "Chrome",
    state: "open",
    icon: (
      <g>
        <circle cx="8" cy="8" r="7" fill="#fbc116" />
        <path d="M8 8 2 4a7 7 0 0 1 12 1z" fill="#e33b2e" />
        <path d="M8 8 2 4a7 7 0 0 0 5 11z" fill="#2ea44f" />
        <circle cx="8" cy="8" r="3" fill="#4285f4" stroke="#fff" />
      </g>
    ),
  },
  {
    label: "Visio",
    state: "open",
    icon: (
      <g>
        <path d="M8 2h8v12H8z" fill="#dfe6f4" />
        <path d="M11 4h3v3h-3zM12 7v3l-2 3M14 10l-2 3" stroke="#2b4f9a" fill="none" />
        <path d="M0 1 10 0v16L0 15z" fill="#2b4f9a" />
        <text x="1" y="12" fontSize="11" fontWeight="700" fill="#fff" fontFamily="Noto Sans, sans-serif">V</text>
      </g>
    ),
  },
  {
    label: "CorelDRAW",
    state: "open",
    icon: (
      <g>
        <path d="M0 0h16v16H0z" fill="#5ba90e" />
        <path d="M1 1q5 0 14 14-4-1-7-4Q2 6 1 1z" fill="#fff" />
      </g>
    ),
  },
  {
    label: "ГИС Оператор",
    state: "active",
    icon: (
      <g>
        <path d="M2 3l3 3M11 1 9 4M0 13l4-2M6 15v-3" stroke="#888" />
        <ellipse cx="8" cy="9" rx="7" ry="5" fill="#222" />
        <path d="M3 8 7 5v4z" fill="#e02020" />
        <path d="m8 5 5 1v3H8z" fill="#3c62e8" />
        <path d="M3 10h4v3z" fill="#28a438" />
        <path d="M9 10h5l-3 3H9z" fill="#f2dc30" />
      </g>
    ),
  },
  {
    label: "PowerPoint",
    state: "open",
    icon: (
      <g>
        <path d="M9 2h7v12H9z" fill="#fff" />
        <path d="M11 5h4v3h-4zM11 11h4" stroke="#d24726" fill="none" />
        <path d="M0 1 10 0v16L0 15z" fill="#d24726" />
        <text x="2" y="12" fontSize="11" fontWeight="700" fill="#fff" fontFamily="Noto Sans, sans-serif">P</text>
      </g>
    ),
  },
];

function Taskbar() {
  return (
    <footer className={`flex h-[30px] shrink-0 items-stretch bg-[#020408] pl-px text-white ${UI}`}>
      {taskbar.map(({ label, state, icon }) => (
        <button
          key={label}
          aria-label={label}
          className={`flex w-[37px] flex-col items-center justify-between pt-[7px] ${state === "active" ? "bg-[#3a3c3f]" : ""}`}
        >
          <svg width="16" height="16" viewBox="0 0 16 16">{icon}</svg>
          <span className={`h-[2px] ${state === "active" ? "w-full bg-[#76b9ed]" : state ? "w-7 bg-[#76b9ed]" : "w-7"}`} />
        </button>
      ))}
      <div className="ml-auto flex items-center pr-[25px]">
        <svg width="12" height="7" fill="none" stroke="#fff"><path d="m1 6 5-5 5 5" /></svg>
        <svg width="14" height="12" className="ml-3"><path d="M1 12v-3M4 12V7M7 12V5M10 12V3M13 12V0" stroke="#fff" strokeWidth="2" /></svg>
        <svg width="16" height="14" fill="none" stroke="#fff" className="ml-2"><path d="M1 5h3l3-4v12L4 9H1zM9 5q2 2 0 4M11 3q3 4 0 8" /><path d="M13 1q4 6 0 12" stroke="#666" /></svg>
        <span className="ml-[10px]">ENG</span>
        <span className="ml-3">22:05</span>
        <svg width="16" height="16" className="ml-[18px]"><path d="M0 1h16v11h-5l-3 4-1-4H0z" fill="#fff" /><path d="M3 4h10M3 6.500h10M3 9h7" stroke="#111" /></svg>
      </div>
    </footer>
  );
}

const mainMenu = ["Файл", "Правка", "Вид", "Поиск", "Задачи", "База", "Масштаб", "Параметры", "Окно", "Помощь"];

export default function App() {
  return (
    <div className={`relative flex h-screen flex-col overflow-hidden bg-[#f0f0f0] text-black ${UI}`}>
      <header className="flex h-[23px] shrink-0 items-center bg-white pr-[2px] pl-[2px] text-[#999]">
        <AppIcon />
        <h1 className="ml-[5px] flex-1 whitespace-nowrap">
          ГИС Оператор версия 11.12.11 - [C:\Users\HP-МУЛЬТИМЕДИА\Desktop\!Башлаев Научная работа\УЧЕБНЫЙ КОМПЛЕКТ №3\25 000\У4108443.sitx, объектов: 7 767]
        </h1>
        <CaptionButtons max={false} />
      </header>
      <nav className="flex h-5 shrink-0 items-center gap-2 pl-[3px] text-[#6d6d6d]">
        <AppIcon />
        <div className="flex flex-1 gap-[15px]">
          {mainMenu.map((item) => (
            <button key={item}>{item}</button>
          ))}
        </div>
        <div className="flex gap-px">
          {["M4 11h6", "M4 6h6v5H4zM6 5V3h6v5h-2M4 7h6", "m4 4 6 6M10 4l-6 6"].map((d) => (
            <button key={d} aria-label="Окно карты" className="h-[18px] w-[18px] bg-[#e4e4e4] pl-[2px]">
              <svg width="14" height="14" fill="none" stroke="#8495a8" strokeWidth="2"><path d={d} /></svg>
            </button>
          ))}
        </div>
      </nav>
      <div className="flex h-[48px] shrink-0 border-t border-[#a0a0a0]">
        <div className="flex h-[46px] border-r border-b border-[#a0a0a0] pl-[5px]">
          <span className="my-[2px] mr-[2px] w-1 border-r border-l border-[#b0b0b0]" />
          {toolGroups.map((group, g) => (
            <div key={g} className="flex">
              {g > 0 && <span className="mx-[2px] my-[2px] w-[2px] border-r border-l border-r-white border-l-[#a0a0a0]" />}
              {group.map(({ label, icon }) => (
                <button key={label} aria-label={label} title={label} className="w-[42px]">
                  <svg width="42" height="43" viewBox="0 0 42 43">{icon}</svg>
                </button>
              ))}
            </div>
          ))}
        </div>
      </div>

      <main className="flex min-h-0 flex-1">
        <div className="relative flex-1 overflow-hidden">
          <MapView />
        </div>
        <div className="flex w-[17px] flex-col bg-[#f8f8f8]">
          <ScrollButton dir="up" label="Вверх" />
          <span className={`mt-[319px] h-[71px] bg-[#f0f0f0] ${RAISED}`} />
          <span className="flex-1" />
          <ScrollButton dir="down" label="Вниз" />
        </div>
      </main>
      <div className="mr-[17px] flex h-[17px] shrink-0 bg-[#f8f8f8]">
        <ScrollButton dir="left" label="Влево" />
        <span className={`ml-[685px] w-[363px] bg-[#f0f0f0] ${RAISED}`} />
        <span className="flex-1" />
        <ScrollButton dir="right" label="Вправо" />
      </div>
      <div className="flex h-[19px] shrink-0 gap-[2px] pt-[2px] whitespace-pre">
        <p className={`w-[1280px] pl-[2px] ${PANEL}`}>ЛИСКИ  1 : 25 000  Листов: 1   (Топографическая 42 года)  Объектов: 7 767 / 0 (отображено / выделено)</p>
        <p className={`flex-1 pl-[2px] ${PANEL}`}>Атлас не открыт</p>
      </div>
      <div className="flex h-[19px] shrink-0 gap-[2px] pt-[2px] whitespace-pre">
        <p className={`w-[500px] text-center ${PANEL}`}>Широта= 53° 43' 07.78"     Долгота= 065° 48' 20.08"  (СК42)</p>
        <p className={`w-[148px] text-center ${PANEL}`}>1 : 5 000</p>
        <div className={`flex flex-1 justify-between pl-[2px] ${PANEL}`}>
          <p>ЛИСКИ / 0.У-41-84-Г-в   (объектов : 7 767)</p>
          <SizeGrip />
        </div>
      </div>
      <Taskbar />

      <ProjectWindow />
      <EditorWindow />
      <CreateTableDialog />
      <SaveAsDialog />
    </div>
  );
}
